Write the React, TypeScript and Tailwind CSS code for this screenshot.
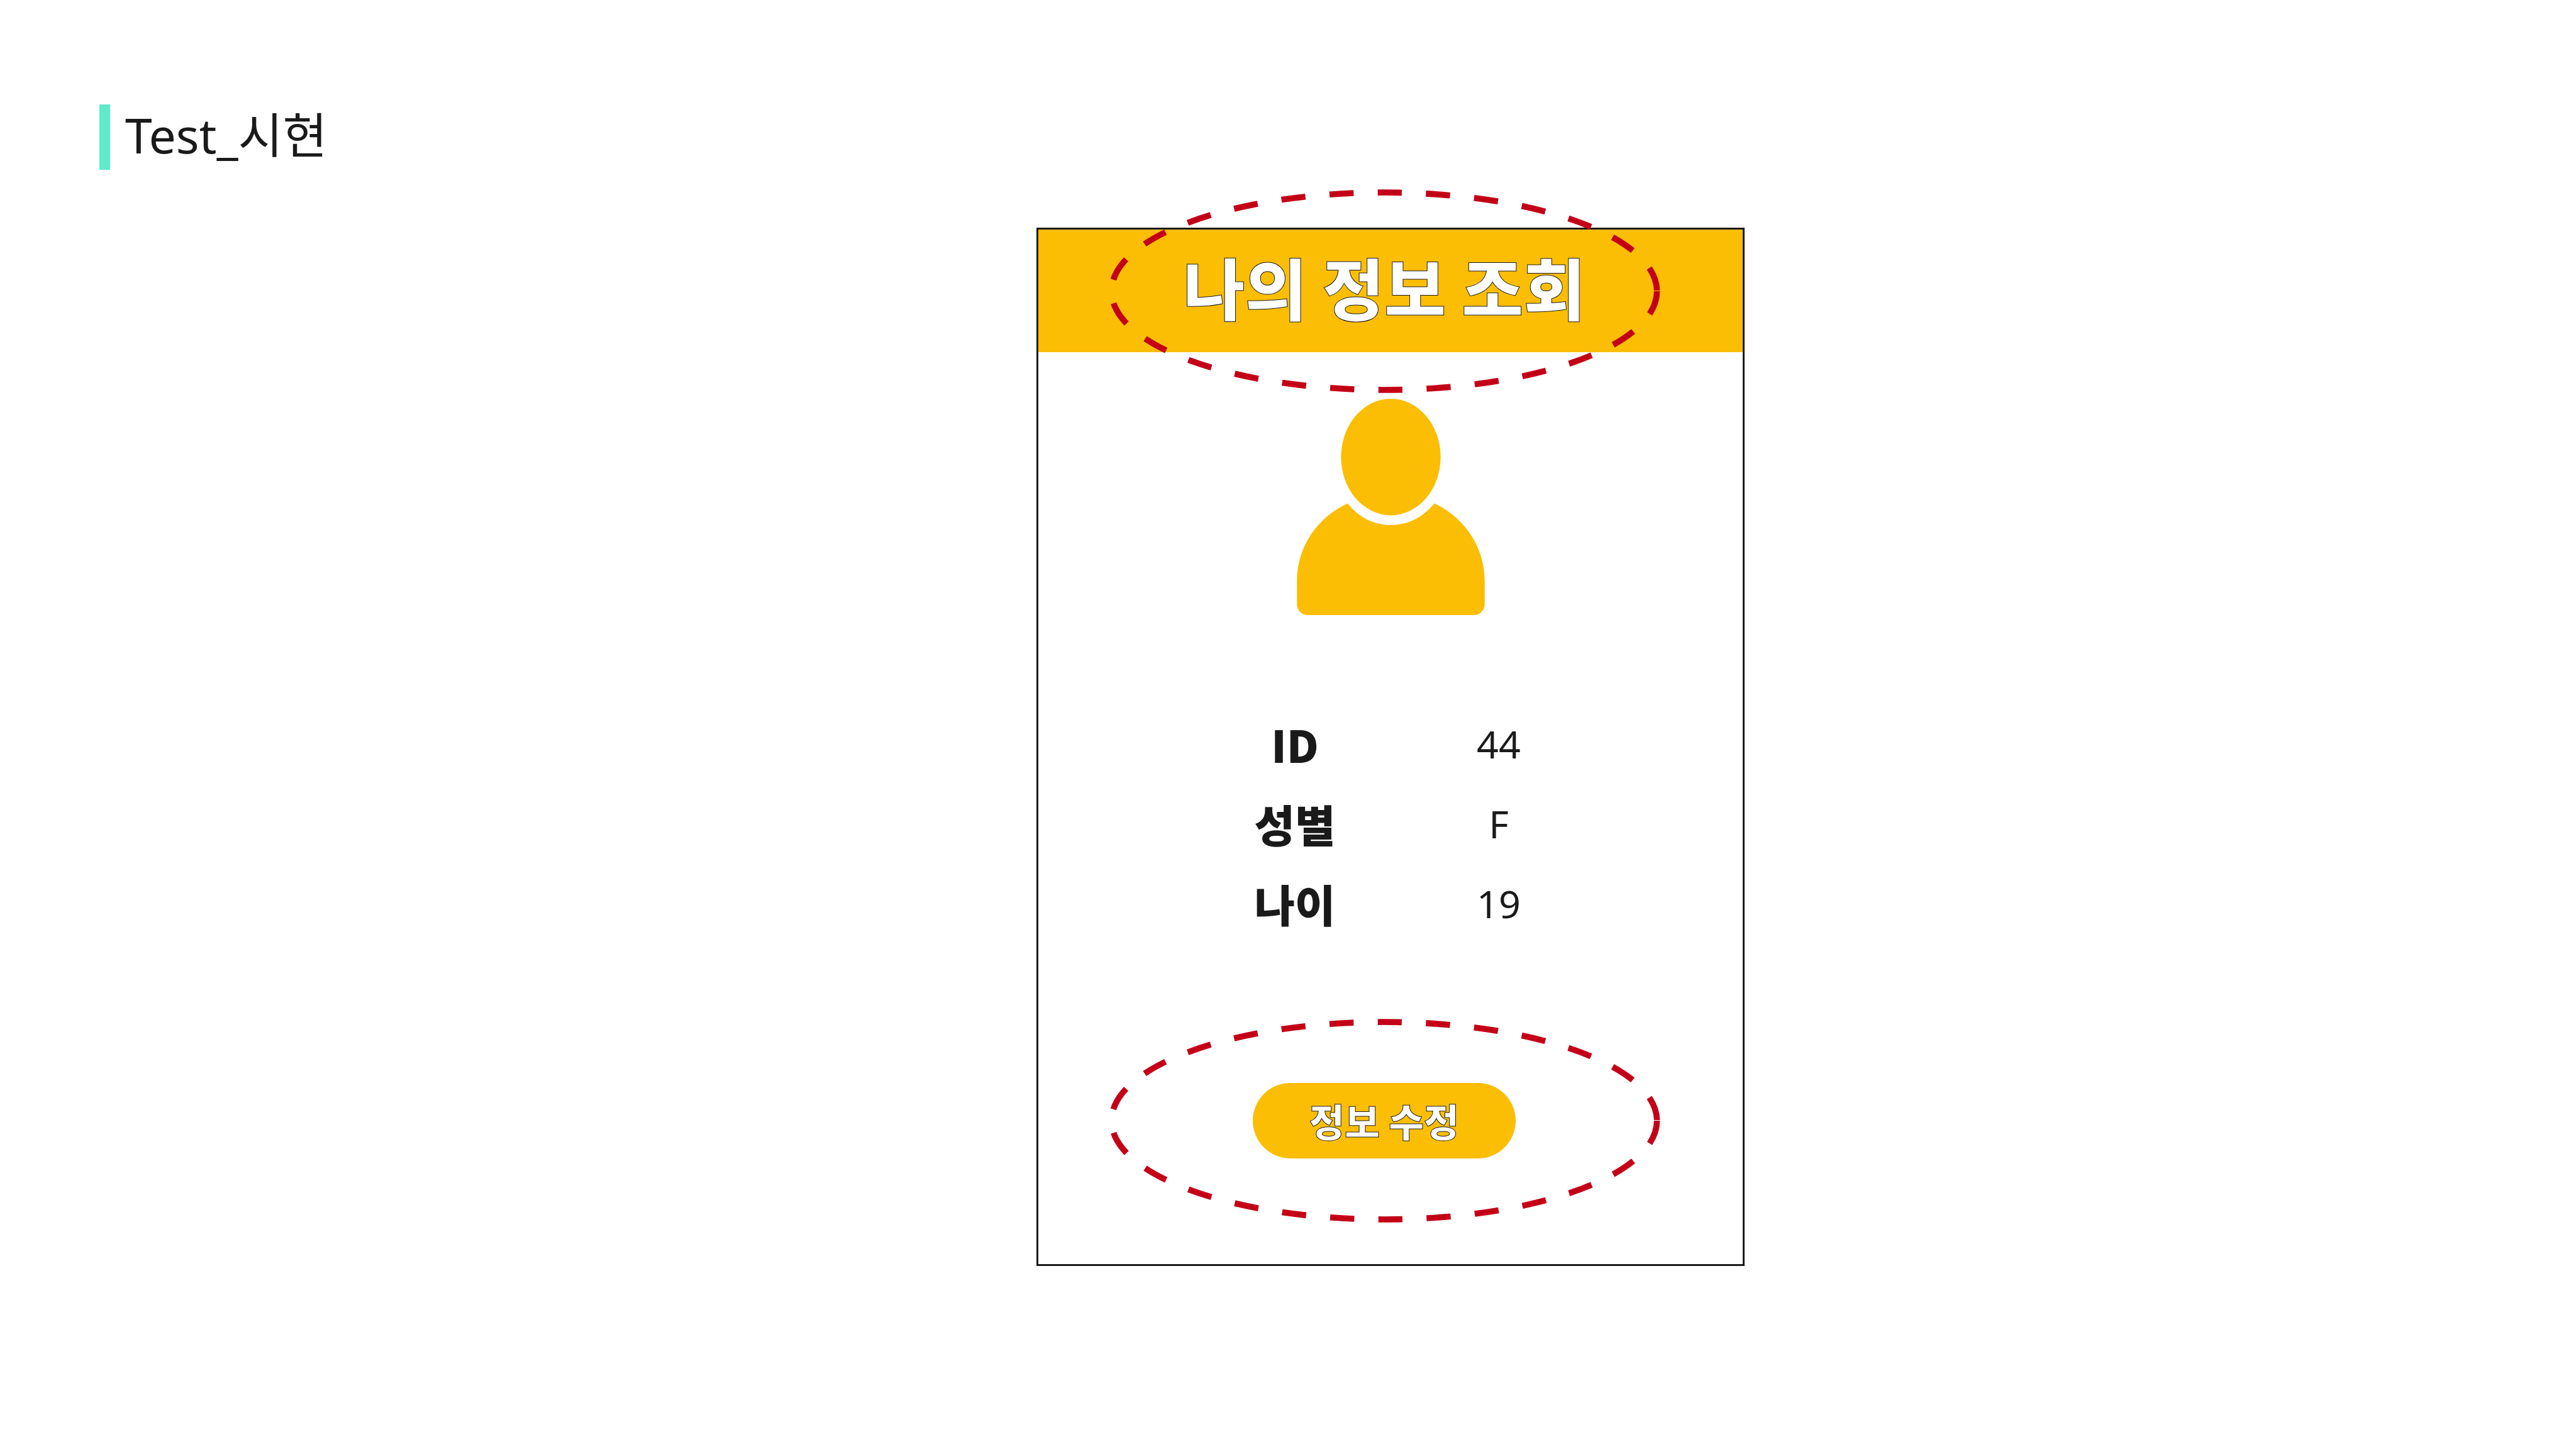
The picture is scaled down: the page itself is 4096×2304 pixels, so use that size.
const rows = [
  { label: "ID", value: "44" },
  { label: "성별", value: "F" },
  { label: "나이", value: "19" },
];

function DashedRing() {
  return (
    <svg
      viewBox="0 0 1144 422"
      className="pointer-events-none absolute top-1/2 left-1/2 h-[324px] w-[878px] max-w-none -translate-x-1/2 -translate-y-1/2"
      fill="none"
      aria-hidden="true"
    >
      <ellipse cx="572" cy="211" rx="565" ry="204.5" stroke="#c30017" strokeWidth="12.5" strokeDasharray="50 50" />
    </svg>
  );
}

function PersonIcon() {
  return (
    <svg viewBox="134 78 1167 1345" className="h-[344px] w-[299px]" fill="#fbbe04" role="img" aria-label="프로필">
      <ellipse cx="717.5" cy="440.5" rx="309.5" ry="362.5" />
      <path d="M448 729C261 815 134 1000 134 1210V1357a66 66 0 0 0 66 66H1235a66 66 0 0 0 66-66V1210C1301 1000 1174 815 988 729C915 818 820 863 717.5 863S520 818 448 729Z" />
    </svg>
  );
}

export default function App() {
  return (
    <main className="min-h-screen bg-white pt-[166px] font-['Noto_Sans','Noto_Sans_CJK_KR',sans-serif] text-[#1a1a1a]">
      <header className="ml-[158px] flex h-[104px] gap-6 whitespace-nowrap">
        <span className="h-full w-[17px] bg-[#5eebcc]" />
        <h1 className="text-[77px] leading-[98px]">Test_시현</h1>
      </header>

      <div className="mt-[92px] grid grid-cols-[1648fr_1126fr_1322fr]">
        <section className="col-start-2 flex flex-col items-center border-[3px] border-[#1a1a1a] pb-[168px]">
          <div className="flex h-[195px] w-full items-center justify-center bg-[#fbbe04] pr-5">
            <div className="relative">
              <h2 className="pb-4 font-['Noto_Sans_CJK_KR',sans-serif] text-[107px] leading-[144px] font-black whitespace-nowrap text-white [-webkit-text-stroke:1px_#1a1a1a]">
                나의 정보 조회
              </h2>
              <DashedRing />
            </div>
          </div>

          <div className="mt-[74px]">
            <PersonIcon />
          </div>

          <table className="mt-[143px] ml-5 w-[648px] table-fixed text-center">
            <tbody>
              {rows.map((row) => (
                <tr key={row.label} className="h-[127px]">
                  <th scope="row" className="pb-1 text-center font-['Noto_Sans_CJK_KR',sans-serif] text-[70px] leading-[96px] font-black">
                    {row.label}
                  </th>
                  <td className="pb-1 text-[61px] leading-[96px]">{row.value}</td>
                </tr>
              ))}
            </tbody>
          </table>

          <div className="relative mt-[220px] mr-5">
            <button
              type="button"
              className="h-[120px] w-[418px] rounded-full bg-[#fbbe04] font-['Noto_Sans_CJK_KR',sans-serif] text-[61px] leading-[80px] font-black whitespace-nowrap text-white [-webkit-text-stroke:1px_#1a1a1a]"
            >
              정보 수정
            </button>
            <DashedRing />
          </div>
        </section>
      </div>
    </main>
  );
}
